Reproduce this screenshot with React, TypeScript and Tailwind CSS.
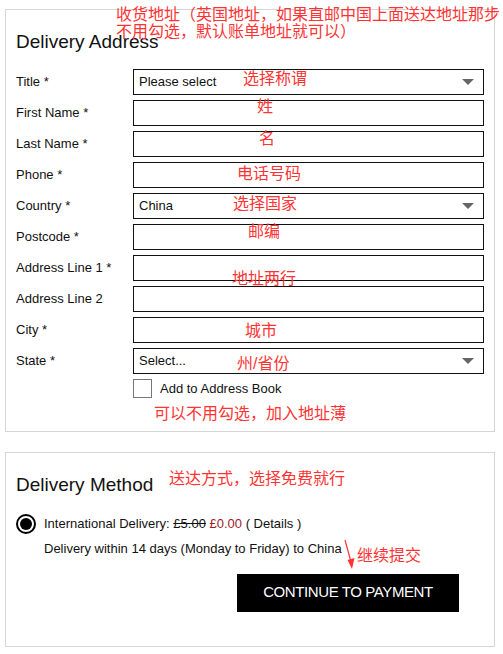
// 收货地址 + 送达方式 — checkout step (annotated screenshot)

type Row = { label: string; select?: string }

const rows: Row[] = [
  { label: 'Title *', select: 'Please select' },
  { label: 'First Name *' },
  { label: 'Last Name *' },
  { label: 'Phone *' },
  { label: 'Country *', select: 'China' },
  { label: 'Postcode *' },
  { label: 'Address Line 1 *' },
  { label: 'Address Line 2' },
  { label: 'City *' },
  { label: 'State *', select: 'Select...' },
]

// red hand-written notes over the page
const notes: { text: string; cls: string }[] = [
  { text: '选择称谓', cls: 'left-[243px] top-[71px]' },
  { text: '姓', cls: 'left-[257px] top-[99px]' },
  { text: '名', cls: 'left-[259px] top-[131px]' },
  { text: '电话号码', cls: 'left-[237px] top-[166px]' },
  { text: '选择国家', cls: 'left-[233px] top-[196px]' },
  { text: '邮编', cls: 'left-[248px] top-[224px]' },
  { text: '地址两行', cls: 'left-[232px] top-[271px]' },
  { text: '城市', cls: 'left-[245px] top-[323px]' },
  { text: '州/省份', cls: 'left-[237px] top-[356px]' },
  { text: '可以不用勾选，加入地址薄', cls: 'left-[154px] top-[406px]' },
  { text: '送达方式，选择免费就行', cls: 'left-[169px] top-[471px]' },
  { text: '继续提交', cls: 'left-[357px] top-[548px]' },
]

function Caret() {
  return (
    <svg width="12" height="6" viewBox="0 0 12 6" className="ml-auto mr-[9px]">
      <polygon points="0,0 12,0 6,6" fill="#666" />
    </svg>
  )
}

export default function App() {
  return (
    <div className="relative min-h-screen bg-white pt-[9px] pl-[5px] font-['Liberation_Sans','Noto_Sans_CJK_SC',sans-serif] text-[#111]">

      {/* ── Delivery Address ── */}
      <section className="w-[490px] border border-[#d6d6d6] px-[10px] pt-5 pb-[32px]">
        <h2 className="text-[19px] leading-6 mb-[15px]">Delivery Address</h2>
        <div className="flex flex-col gap-[5px]">
          {rows.map(r => (
            <div key={r.label} className="flex items-center h-[26px]">
              <span className="w-[117px] text-[13px]">{r.label}</span>
              <div className="flex-1 h-full border border-[#111] flex items-center pl-[5px] text-[13px]">
                {r.select && (
                  <>
                    <span>{r.select}</span>
                    <Caret />
                  </>
                )}
              </div>
            </div>
          ))}
        </div>
        <label className="flex items-center mt-[5px] ml-[117px] gap-[8px] text-[13px]">
          <span className="w-[19px] h-[19px] border border-[#777]" />
          <span>Add to Address Book</span>
        </label>
      </section>

      {/* ── Delivery Method ── */}
      <section className="w-[490px] mt-5 border border-[#d6d6d6] px-[10px] pt-5 pb-[34px]">
        <h2 className="text-[19px] leading-6">Delivery Method</h2>
        <div className="flex items-center gap-[8px] mt-[17px] h-5 text-[13px]">
          <span className="w-5 h-5 rounded-full border-2 border-black flex items-center justify-center">
            <span className="w-3 h-3 rounded-full bg-black" />
          </span>
          <span>
            International Delivery: <span className="line-through">£5.00</span>{' '}
            <span className="text-[#a01b2c]">£0.00</span> ( Details )
          </span>
        </div>
        <p className="ml-[28px] mt-[5px] leading-5 text-[13px]">
          Delivery within 14 days (Monday to Friday) to China
        </p>
        <button className="ml-[221px] mt-[15px] w-[222px] h-[38px] bg-black text-white text-[15px] tracking-[-0.4px]">
          CONTINUE TO PAYMENT
        </button>
      </section>

      {/* ── annotations ── */}
      <div className="absolute left-[116px] top-[6px] text-[16px] leading-[17px] text-[#ff3333] whitespace-nowrap">
        <div>收货地址（英国地址，如果直邮中国上面送达地址那步</div>
        <div>不用勾选，默认账单地址就可以）</div>
      </div>
      {notes.map(n => (
        <span
          key={n.text}
          className={`absolute text-[16px] leading-4 text-[#ff3333] whitespace-nowrap ${n.cls}`}
        >
          {n.text}
        </span>
      ))}
      <svg width="18" height="34" viewBox="0 0 18 34" className="absolute left-[340px] top-[538px]">
        <line x1="5" y1="2" x2="11" y2="24" stroke="#ff3333" strokeWidth="1.2" />
        <polygon points="7.5,22 14.5,20 12,31" fill="#ff3333" />
      </svg>
    </div>
  )
}
